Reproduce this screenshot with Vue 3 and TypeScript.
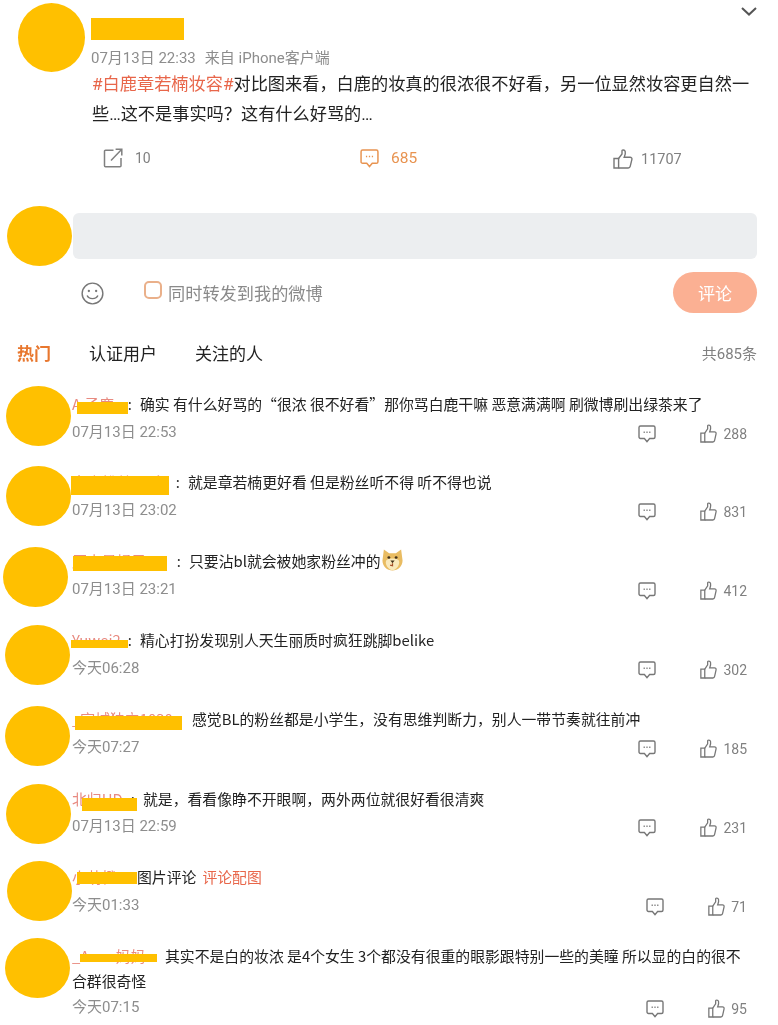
<script setup lang="ts">
interface Comment {
  id: number;
  name: string;
  text: string;
  time: string;
  likes: number;
  height: number;
  avatarX: number;
  textY: number;
  nameWidth: number;
  colon: boolean;
  mask: { x: number; y: number; w: number; h: number };
  timeGap?: number;
  dog?: boolean;
  link?: string;
}

const comments: Comment[] = [
  { id: 1, name: 'A 子鹿', text: '确实 有什么好骂的“很浓 很不好看”那你骂白鹿干嘛 恶意满满啊 刷微博刷出绿茶来了', time: '07月13日 22:53', likes: 288, height: 80, avatarX: 6, textY: 19, nameWidth: 68, colon: true, mask: { x: 5, y: 9, w: 51, h: 12 } },
  { id: 2, name: '白鹿粉丝不听', text: '就是章若楠更好看 但是粉丝听不得 听不得也说', time: '07月13日 23:02', likes: 831, height: 81, avatarX: 6, textY: 17, nameWidth: 116, colon: true, mask: { x: -1, y: 5, w: 98, h: 19 } },
  { id: 3, name: '原来是橘子', text: '只要沾bl就会被她家粉丝冲的', time: '07月13日 23:21', likes: 412, height: 78, avatarX: 3, textY: 15, nameWidth: 117, colon: true, dog: true, mask: { x: 1, y: 6, w: 94, h: 15 } },
  { id: 4, name: 'Yuwei2', text: '精心打扮发现别人天生丽质时疯狂跳脚belike', time: '今天06:28', likes: 302, height: 81, avatarX: 5, textY: 16, nameWidth: 68, colon: true, mask: { x: -1, y: 11, w: 57, h: 8 } },
  { id: 5, name: '_宸城独立1030', text: '感觉BL的粉丝都是小学生，没有思维判断力，别人一带节奏就往前冲', time: '今天07:27', likes: 185, height: 78, avatarX: 5, textY: 14, nameWidth: 120, colon: false, mask: { x: 3, y: 8, w: 107, h: 14 } },
  { id: 6, name: '北归HD', text: '就是，看看像睁不开眼啊，两外两位就很好看很清爽', time: '07月13日 22:59', likes: 231, height: 77, avatarX: 6, textY: 16, nameWidth: 71, colon: true, timeGap: 1, mask: { x: 10, y: 10, w: 55, h: 13 } },
  { id: 7, name: '小萌橙', text: '图片评论', link: '评论配图', time: '今天01:33', likes: 71, height: 77, avatarX: 7, textY: 17, nameWidth: 65, colon: false, mask: { x: 5, y: 6, w: 60, h: 12 } },
  { id: 8, name: '_Anna妈妈', text: '其实不是白的妆浓 是4个女生 3个都没有很重的眼影跟特别一些的美瞳 所以显的白的很不合群很奇怪', time: '今天07:15', likes: 95, height: 87, avatarX: 5, textY: 19, nameWidth: 93, colon: true, timeGap: 0, mask: { x: 8, y: 9, w: 77, h: 8 } }
];

function bodyPadding(c: Comment): string {
  return `${c.textY - 14}px`;
}
</script>

<template>
  <div class="page">
    <section class="post">
      <div class="post-avatar"></div>
      <div class="post-main">
        <div class="post-name"></div>
        <div class="post-meta">07月13日 22:33<span class="source">来自 iPhone客户端</span></div>
        <p class="post-text"><span class="topic">#白鹿章若楠妆容#</span>对比图来看，白鹿的妆真的很浓很不好看，另一位显然妆容更自然一些…这不是事实吗？这有什么好骂的…</p>
        <div class="post-actions">
          <div class="action share">
            <svg class="share-icon" viewBox="0 0 20 20" fill="none" stroke="currentColor" stroke-width="1.5">
              <path d="M10.5 2.2H2.5a1 1 0 0 0-1 1V17.8a1 1 0 0 0 1 1H17a1 1 0 0 0 1-1V10" />
              <path d="M8 12.5 18.3 1.8M12.6 1.2h6.2v6.2" />
            </svg>
            <span>10</span>
          </div>
          <div class="action active">
            <svg class="comment-icon large" viewBox="0 0 18 18" fill="none" stroke="currentColor" stroke-width="1.4">
              <path d="M2.5 1H15.5A1.5 1.5 0 0 1 17 2.5V12A1.5 1.5 0 0 1 15.5 13.5H11.6L9 16.6 6.4 13.5H2.5A1.5 1.5 0 0 1 1 12V2.5A1.5 1.5 0 0 1 2.5 1Z" />
              <path d="M5.6 7.2h1.2M8.4 7.2h1.2M11.2 7.2h1.2" />
            </svg>
            <span>685</span>
          </div>
          <div class="action like">
            <svg class="thumb-icon large" viewBox="0 0 20 20" fill="none" stroke="currentColor" stroke-width="1.4">
              <path d="M1 9.5H5.6V19H1Z" />
              <path d="M5.6 9.5 9 5V1.8C9 .8 11.6 .4 12.2 2.5 12.8 4.6 11.7 7 11.2 8.2H17C18.4 8.2 19.2 9.2 18.9 10.4L17.2 17.4C17 18.4 16.2 19 15.2 19H5.6" />
            </svg>
            <span>11707</span>
          </div>
        </div>
      </div>
      <svg class="chevron" viewBox="0 0 16 9" fill="none" stroke="#555" stroke-width="2">
        <path d="M1 1 8 7.6 15 1" />
      </svg>
    </section>

    <section class="editor">
      <div class="input-row">
        <div class="editor-avatar"></div>
        <div class="input-box"></div>
      </div>
      <div class="editor-tools">
        <svg class="smile" viewBox="0 0 24 24" fill="none" stroke="#777" stroke-width="1.5">
          <circle cx="12" cy="12" r="10.8" />
          <circle cx="8.2" cy="9.4" r="1.2" fill="#777" stroke="none" />
          <circle cx="15.8" cy="9.4" r="1.2" fill="#777" stroke="none" />
          <path d="M6.4 14.2C8 18.4 16 18.4 17.6 14.2" />
        </svg>
        <label class="repost">
          <span class="check"></span>
          <span>同时转发到我的微博</span>
        </label>
        <button class="submit" type="button">评论</button>
      </div>
    </section>

    <nav class="tabs">
      <span class="tab current">热门</span>
      <span class="tab">认证用户</span>
      <span class="tab">关注的人</span>
      <span class="total">共685条</span>
    </nav>

    <section class="comments">
      <article v-for="c in comments" :key="c.id" class="comment" :style="{ height: c.height + 'px' }">
        <div class="avatar-col">
          <div class="avatar" :style="{ marginLeft: c.avatarX + 'px' }"></div>
        </div>
        <div class="comment-body" :style="{ paddingTop: bodyPadding(c) }">
          <p class="comment-text">
            <span class="name" :style="{ width: c.nameWidth + 'px' }">
              <span class="name-text">{{ c.name }}</span>
              <span v-if="c.colon" class="colon">:</span>
              <span
                class="mask"
                :style="{ left: c.mask.x + 'px', top: c.mask.y + 'px', width: c.mask.w + 'px', height: c.mask.h + 'px' }"
              ></span>
            </span>{{ c.text }}<a v-if="c.link" class="pic-link">{{ c.link }}</a>
            <svg v-if="c.dog" class="dog" viewBox="0 0 24 24">
              <path d="M3 1.5 8.5 5.5H15.5L21 1.5 22.5 13C22.5 19 17.5 23.500 12 23.500S1.500 19 1.500 13Z" fill="#e9bc62" />
              <path d="M5 15C5 11.500 8.500 11 12 11S19 11.500 19 15 15.500 23 12 23 5 18.500 5 15Z" fill="#f9e9bb" />
              <ellipse cx="8.200" cy="10" rx="1.500" ry="1.300" fill="#40301a" />
              <ellipse cx="15.800" cy="10" rx="1.500" ry="1.300" fill="#40301a" />
              <path d="M9.800 13H14.200L12 15.800Z" fill="#40301a" />
              <path d="M12 15.800V18.500L9.500 17.800" fill="none" stroke="#a5502a" stroke-width="1.300" />
            </svg>
          </p>
          <div class="comment-meta" :style="{ marginTop: (c.timeGap ?? 2) + 'px' }">
            <span class="time">{{ c.time }}</span>
            <div class="comment-actions">
              <svg class="comment-icon" viewBox="0 0 18 18" fill="none" stroke="currentColor" stroke-width="1.4">
                <path d="M2.5 1H15.500A1.500 1.500 0 0 1 17 2.500V12A1.500 1.500 0 0 1 15.500 13.500H11.600L9 16.600 6.400 13.500H2.500A1.500 1.500 0 0 1 1 12V2.500A1.500 1.500 0 0 1 2.500 1Z" />
                <path d="M5.600 7.200h1.200M8.400 7.200h1.200M11.200 7.200h1.200" />
              </svg>
              <svg class="thumb-icon" viewBox="0 0 20 22" fill="none" stroke="currentColor" stroke-width="1.500">
                <path d="M1 10.500H5.600V21H1Z" />
                <path d="M5.600 10.500 9 5.500V2C9 .8 11.800 .4 12.400 2.700 13 5 11.900 7.600 11.400 9H17C18.400 9 19.200 10.100 18.900 11.400L17.200 19.200C17 20.300 16.200 21 15.200 21H5.600" />
              </svg>
              <span class="likes">{{ c.likes }}</span>
            </div>
          </div>
        </div>
      </article>
    </section>
  </div>
</template>

<style scoped>
.page {
  width: 778px;
  height: 1025px;
  overflow: hidden;
  color: #222;
  filter: blur(0.45px);
}

.post {
  position: relative;
  display: flex;
  height: 206px;
  padding-top: 3px;
  box-sizing: border-box;
}

.post-avatar {
  flex: none;
  width: 67px;
  height: 69px;
  margin-left: 18px;
  border-radius: 50%;
  background: #ffc000;
}

.post-main {
  width: 670px;
  margin-left: 6px;
}

.post-name {
  width: 93px;
  height: 22px;
  margin-top: 15px;
  background: #ffc000;
}

.post-meta {
  margin-top: 6px;
  height: 23px;
  line-height: 24px;
  font-size: 15px;
  color: #8d8d8d;
}

.source {
  margin-left: 9px;
}

.post-text {
  margin: 0 0 0 1px;
  font-size: 17.2px;
  line-height: 30px;
  color: #222;
}

.topic {
  color: #e8664a;
}

.post-actions {
  display: grid;
  grid-template-columns: 257px 253px 1fr;
  margin: 17px 0 0 12px;
  height: 24px;
}

.action {
  display: flex;
  align-items: center;
  gap: 12px;
  font-size: 15.5px;
  color: #808080;
}

.action.share {
  font-size: 14px;
}

.action.active {
  color: #e89350;
}

.action.like {
  gap: 8px;
  padding-top: 2px;
  font-size: 14.5px;
}

.share-icon {
  width: 20px;
  height: 20px;
}

.comment-icon {
  flex: none;
  width: 18px;
  height: 18px;
  color: #777;
}

.comment-icon.large {
  color: inherit;
  width: 19px;
  height: 19px;
}

.thumb-icon {
  flex: none;
  width: 17px;
  height: 19px;
  color: #777;
}

.thumb-icon.large {
  width: 20px;
  height: 20px;
}

.chevron {
  position: absolute;
  top: 7px;
  right: 21px;
  width: 16px;
  height: 9px;
}

.input-row {
  display: flex;
  align-items: center;
  height: 60px;
}

.editor-avatar {
  flex: none;
  width: 65px;
  height: 60px;
  margin-left: 7px;
  border-radius: 50%;
  background: #ffc000;
}

.input-box {
  width: 684px;
  height: 46px;
  margin-left: 1px;
  border-radius: 6px;
  background: #eceef0;
}

.editor-tools {
  display: flex;
  align-items: center;
  height: 41px;
  width: 757px;
  margin-top: 6px;
  padding-left: 81px;
  box-sizing: border-box;
}

.smile {
  width: 23px;
  height: 23px;
  margin-top: 1px;
}

.repost {
  display: flex;
  align-items: center;
  gap: 6px;
  margin-left: 40px;
  font-size: 17.2px;
  color: #8a8a8a;
}

.check {
  flex: none;
  box-sizing: border-box;
  width: 18px;
  height: 18px;
  border: 2px solid #eab08a;
  border-radius: 5px;
  margin-top: -6px;
}

.submit {
  width: 84px;
  height: 41px;
  margin-left: auto;
  padding: 0;
  border: none;
  border-radius: 21px;
  background: #fbb093;
  color: #fff;
  font: inherit;
  font-size: 17px;
}

.tabs {
  display: flex;
  align-items: center;
  width: 757px;
  height: 34px;
  margin-top: 22px;
  padding-left: 17px;
  box-sizing: border-box;
  font-size: 17px;
}

.tab {
  margin-right: 38px;
  color: #222;
}

.tab.current {
  color: #e8772e;
  font-weight: 700;
}

.total {
  margin-left: auto;
  font-size: 15px;
  color: #808080;
}

.comments {
  margin-top: 17px;
}

.comment {
  display: flex;
}

.avatar-col {
  flex: none;
  width: 72px;
}

.avatar {
  width: 65px;
  height: 60px;
  border-radius: 50%;
  background: #ffc000;
}

.comment-body {
  width: 680px;
}

.comment-text {
  margin: 0;
  font-family: "Noto Sans CJK SC", Roboto, sans-serif;
  font-size: 14.85px;
  line-height: 25px;
  color: #222;
}

.name {
  position: relative;
  display: inline-flex;
  justify-content: space-between;
  height: 25px;
  vertical-align: top;
}

.name-text {
  min-width: 0;
  white-space: nowrap;
  overflow: hidden;
  color: #e88a80;
}

.colon {
  margin-right: 8px;
  color: #333;
}

.mask {
  position: absolute;
  margin-top: 1.5px;
  background: #ffc000;
}

.pic-link {
  margin-left: 6px;
  color: #e8664a;
}

.dog {
  width: 23px;
  height: 23px;
  margin-top: -6px;
  vertical-align: middle;
}

.comment-meta {
  display: flex;
  align-items: center;
  justify-content: space-between;
  height: 25px;
  padding-right: 5px;
}

.time {
  font-size: 15px;
  color: #8d8d8d;
}

.comment-actions {
  display: flex;
  align-items: center;
  margin-top: 6px;
  font-size: 14px;
  color: #808080;
}

.comment-actions .thumb-icon {
  margin-left: 44px;
}

.likes {
  margin-left: 6px;
}
</style>

<style>
html,
body {
  margin: 0;
  background: #fff;
}

body {
  font-family: Roboto, "Noto Sans CJK SC", sans-serif;
}
</style>
